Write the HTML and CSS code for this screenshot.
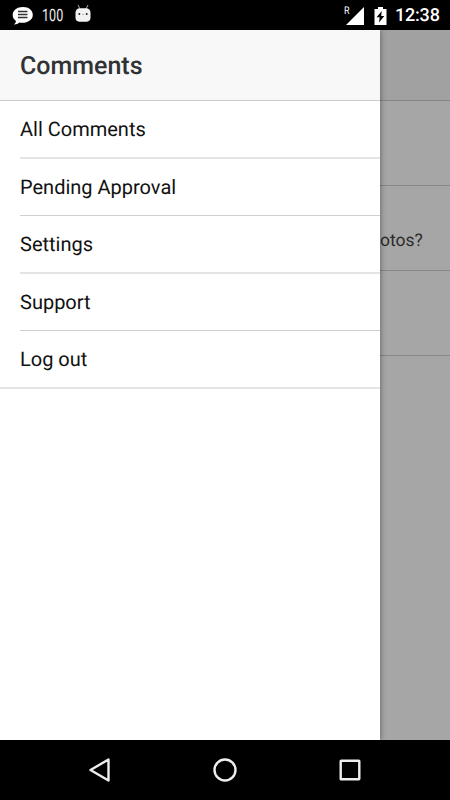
FILE: index.html
```
<!DOCTYPE html>
<html lang="en">
<head>
<meta charset="utf-8">
<title>Comments</title>
<link rel="stylesheet" href="styles.css">
</head>
<body>
<div class="phone">
  <header class="status">
    <svg class="chat" width="22" height="20" viewBox="0 0 22 20"><path fill="#fff" d="M11 1C5 1 .7 4.300.7 9c0 2.700 1.300 4.600 3.300 6-.2 1.500-.9 2.500-2.200 3.500 2.200.1 4.200-.6 5.800-1.900 7 1.200 13.200-2.400 13.200-7.600C20.800 4.300 17 1 11 1z"/><path stroke="#333" stroke-width="1.500" d="M6 5.500h9.500M6 8.500h9.500M6 11.500h9.500"/></svg>
    <span class="level">100</span>
    <svg class="droid" width="16" height="19" viewBox="0 0 16 19"><path stroke="#aaa" stroke-width="1" d="M3 1l2 4M13 1l-2 4"/><path fill="#f2f2f2" d="M.5 8.500Q.7 4.500 5 4.300h6q4.300.2 4.500 4.200v5q0 3.800-3.700 4.200H4.200Q.5 17.300.5 13.500z"/><circle cx="4.300" cy="10" r="1" fill="#222"/><circle cx="11.700" cy="10" r="1" fill="#222"/><path d="M7 10.500h2" stroke="#bbb"/></svg>
    <span class="roaming">R</span>
    <svg class="signal" width="18" height="18" viewBox="0 0 18 18"><path fill="#fff" d="M18 0v18H0z"/></svg>
    <svg class="battery" width="13" height="18" viewBox="0 0 13 18"><path fill="#fff" d="M4 0h5v2h3.500v16H.5V2H4z"/><path d="M7.800 4L2.600 10.300h3.100L5 15.500l5.300-6.600H7.200z"/></svg>
    <time class="clock">12:38</time>
  </header>
  <main class="screen">
    <nav class="drawer">
      <h1 class="title">Comments</h1>
      <ul class="menu">
        <li>All Comments</li>
        <li>Pending Approval</li>
        <li>Settings</li>
        <li>Support</li>
        <li>Log out</li>
      </ul>
    </nav>
    <section class="page">
      <div class="bar"></div>
      <div class="row"></div>
      <div class="row message">otos?</div>
      <div class="row"></div>
    </section>
  </main>
  <footer class="keys">
    <svg width="26" height="26" viewBox="0 0 26 26"><path d="M21.500 2.500v21L3.500 13z"/></svg>
    <svg width="26" height="26" viewBox="0 0 26 26"><circle cx="13" cy="13" r="10.500"/></svg>
    <svg width="26" height="26" viewBox="0 0 26 26"><rect x="3.700" y="3.700" width="18.600" height="18.600" rx=".5"/></svg>
  </footer>
</div>
</body>
</html>
```
FILE: styles.css
```
* { box-sizing: border-box; }
body { margin: 0; font-family: Roboto, sans-serif; text-rendering: geometricPrecision; }
.phone { width: 450px; height: 800px; display: flex; flex-direction: column; overflow: hidden; background: #000; }
.status { height: 30px; display: flex; align-items: center; color: #fff; padding-left: 12px; }
.status svg, .status span { flex: none; }
.chat { margin-top: 1px; }
.level { margin-left: 8px; width: 22px; font-size: 17px; line-height: 30px; color: #eee; transform: scaleX(.74); transform-origin: left; margin-top: 1px; }
.droid { margin-left: 11px; margin-top: -3px; }
.roaming { margin-left: 253px; width: 6px; font-size: 10.500px; line-height: 12px; align-self: flex-start; margin-top: 5px; transform: scaleX(.85); transform-origin: left; }
.signal { margin-left: -4px; }
.signal, .battery { margin-top: 1px; }
.battery { margin-left: 10px; }
.clock { margin-left: 8px; font-size: 18px; font-weight: 500; line-height: 30px; margin-top: 2px; letter-spacing: -.2px; }
.screen { height: 710px; display: flex; }
.drawer { width: 380px; flex: none; background: #fff; z-index: 1; box-shadow: 0 0 6px rgba(0, 0, 0, .45); clip-path: inset(0 -10px 0 0); }
.title { margin: 0; height: 71px; padding: 1px 0 0 20px; font-size: 25px; font-weight: 500; line-height: 71px; color: #303234; background: #f8f8f8; border-bottom: 1px solid #ccc; }
.menu { list-style: none; margin: 0; padding: 0; }
.menu li { height: 58px; margin-left: 20px; font-size: 20px; line-height: 57px; color: #111; border-bottom: 2px solid #e4e4e4; }
.menu li:nth-child(even) { height: 57px; border-bottom: 1px solid #d0d0d0; line-height: 56px; }
.menu li:last-child { margin-left: 0; padding-left: 20px; }
.page { flex: 1; background: #a6a6a6; }
.bar { height: 71px; background: #a1a1a1; border-bottom: 1px solid #858585; }
.row { height: 85px; border-bottom: 1px solid #878787; }
.message { padding-top: 43px; font-size: 17.500px; line-height: 25px; color: #2b2b2b; }
.keys { height: 60px; display: flex; align-items: center; justify-content: space-between; padding: 0 87px; }
.keys svg { fill: none; stroke: #eee; stroke-width: 2.400; stroke-linejoin: round; }
```
